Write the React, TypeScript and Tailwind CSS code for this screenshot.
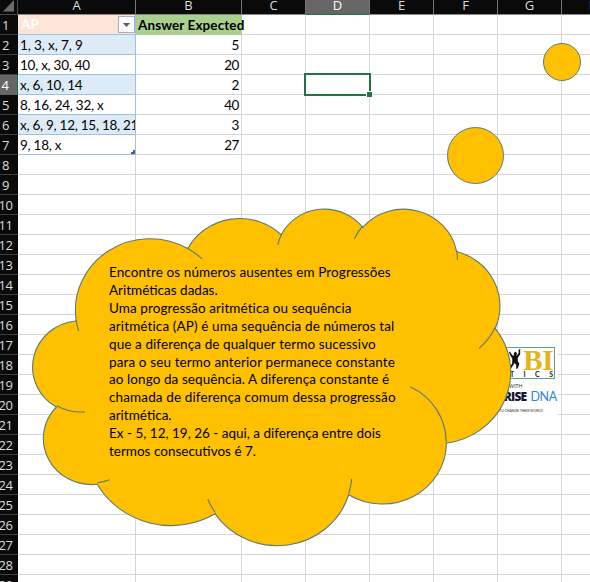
type Arc = [rx: number, ry: number, start: number, sweep: number];

const RAD = Math.PI / 180;

// Converts a visual angle (1/60000 degree) to the ellipse's parametric angle.
function param(rx: number, ry: number, angle: number) {
  const a = (angle / 60000) * RAD;
  return Math.atan2(Math.sin(a) * rx, Math.cos(a) * ry);
}

function arcPath(x: number, y: number, arcs: Arc[]) {
  let d = `M${x} ${y}`;
  for (const [rx, ry, start, sweep] of arcs) {
    const t0 = param(rx, ry, start);
    const t1 = param(rx, ry, start + sweep);
    x += rx * (Math.cos(t1) - Math.cos(t0));
    y += ry * (Math.sin(t1) - Math.sin(t0));
    let span = t1 - t0;
    while (span < 0) span += 2 * Math.PI;
    d += `A${rx} ${ry} 0 ${span > Math.PI ? 1 : 0} 1 ${x.toFixed(1)} ${y.toFixed(1)}`;
  }
  return d;
}

const cloudOutline =
  arcPath(3900, 14370, [
    [6753, 9190, -11429249, 7426832],
    [5333, 7267, -8646143, 5396714],
    [4365, 5945, -8748475, 5983381],
    [4857, 6595, -7859164, 7034504],
    [5333, 7273, -4722533, 6541615],
    [6775, 9220, -2776035, 7816140],
    [5785, 7867, 37501, 6842000],
    [6752, 9215, 1347096, 6910353],
    [7720, 10543, 3974558, 4542661],
    [4360, 5918, -16496525, 8804134],
    [4345, 5945, -14809710, 9151131],
  ]) + "Z";

const cloudFolds = [
  arcPath(4693, 26177, [[4345, 5945, 5204520, 1585770]]),
  arcPath(6928, 34899, [[4360, 5918, 4416628, 686848]]),
  arcPath(16478, 39090, [[6752, 9215, 8257449, 844866]]),
  arcPath(28827, 34751, [[6752, 9215, 387196, 959901]]),
  arcPath(34129, 22954, [[5785, 7867, -4217541, 4255042]]),
  arcPath(41798, 15354, [[5333, 7273, 1819082, 1665090]]),
  arcPath(38324, 5426, [[4857, 6595, -824660, 891534]]),
  arcPath(29078, 3952, [[4857, 6595, -8950887, 1091722]]),
  arcPath(22141, 4720, [[4365, 5945, -9809656, 1061181]]),
  arcPath(14000, 5192, [[6753, 9190, -4002417, 739161]]),
  arcPath(4127, 15789, [[6753, 9190, 9459261, 711490]]),
].join("");

const columns = [
  { name: "A", width: "w-[118px]" },
  { name: "B", width: "w-[106px]" },
  { name: "C", width: "w-16" },
  { name: "D", width: "w-16" },
  { name: "E", width: "w-16" },
  { name: "F", width: "w-16" },
  { name: "G", width: "w-16" },
  { name: "H", width: "w-16" },
];

const data: Record<number, [string, string]> = {
  2: ["1, 3, x, 7, 9", "5"],
  3: ["10, x, 30, 40", "20"],
  4: ["x, 6, 10, 14", "2"],
  5: ["8, 16, 24, 32, x", "40"],
  6: ["x, 6, 9, 12, 15, 18, 21", "3"],
  7: ["9, 18, x", "27"],
};

const lines: [text: string, tracking: string][] = [
  ["Encontre os números ausentes em Progressões", "tracking-[0.1px]"],
  ["Aritméticas dadas.", "tracking-normal"],
  ["Uma progressão aritmética ou sequência", "tracking-[0.08px]"],
  ["aritmética (AP) é uma sequência de números tal", "tracking-[0.11px]"],
  ["que a diferença de qualquer termo sucessivo", "tracking-[0.09px]"],
  ["para o seu termo anterior permanece constante", "tracking-[0.12px]"],
  ["ao longo da sequência. A diferença constante é", "tracking-[0.08px]"],
  ["chamada de diferença comum dessa progressão", "tracking-[0.13px]"],
  ["aritmética.", "tracking-normal"],
  ["Ex - 5, 12, 19, 26 - aqui, a diferença entre dois", "tracking-normal"],
  ["termos consecutivos é 7.", "tracking-normal"],
];

function ColumnHeaders() {
  return (
    <div className="flex h-[15px] w-[690px] bg-[#0a0a0a] font-['Open_Sans',sans-serif] text-[13px] text-[#dcdcdc]">
      <div className="flex h-[15px] w-[18px] shrink-0 items-start justify-end border-r border-b border-[#4a4a4a] pr-[3px]">
        <svg width="12" height="12" viewBox="0 0 12 12">
          <path d="M12 0V11.500H1Z" fill="#6b6b6b" />
        </svg>
      </div>
      {columns.map((c) => (
        <div
          key={c.name}
          className={`${c.width} flex h-[15px] shrink-0 justify-center border-r border-b leading-[10px] ${
            c.name === "D"
              ? "border-r-[#777] border-b-[#217346] bg-[#666] text-white"
              : "border-r-[#777] border-b-[#8a8a8a]"
          }`}
        >
          {c.name}
        </div>
      ))}
    </div>
  );
}

function CellA({ row }: { row: number }) {
  if (row === 1) {
    return (
      <div className="flex h-5 w-[118px] shrink-0 items-center justify-between border-r border-b border-[#9dc3e6] bg-[#fce4d6] pl-[3px]">
        <span className="text-[13.5px] font-bold text-white">AP</span>
        <span className="flex h-[17px] w-[17px] items-center justify-center border border-[#a3b0c0] bg-[#fbfbfc]">
          <svg width="7" height="4" viewBox="0 0 7 4">
            <path d="M0 0H7L3.500 4Z" fill="#5a5a5a" />
          </svg>
        </span>
      </div>
    );
  }
  const entry = data[row];
  if (!entry) return <div className="h-5 w-[118px] shrink-0 border-r border-b border-[#d6d6d6]" />;
  return (
    <div
      className={`relative h-5 w-[118px] shrink-0 overflow-hidden border-r border-b border-[#9dbfe0] pl-[2px] leading-[20px] whitespace-nowrap ${
        row === 2 ? "tracking-[-0.1px]" : "tracking-[-0.26px]"
      } ${row % 2 === 0 ? "bg-[#ddebf7]" : "bg-white"}`}
    >
      {entry[0]}
      {row === 7 && (
        <svg className="absolute right-0 bottom-0" width="4" height="4" viewBox="0 0 4 4">
          <path d="M2 0H4V4H0V2H2Z" fill="#4659a8" />
        </svg>
      )}
    </div>
  );
}

function Row({ row }: { row: number }) {
  return (
    <div className="flex h-5 w-[690px]">
      <div
        className={`flex h-5 w-[18px] shrink-0 justify-center border-b pr-[7px] font-['Open_Sans',sans-serif] text-[13px] leading-[21px] tracking-[-0.5px] ${
          row === 4
            ? "border-r border-r-[#217346] border-b-[#666] bg-[#666] text-white"
            : "border-b-[#3d3d3d] bg-[#0a0a0a] text-[#dcdcdc]"
        }`}
      >
        {row}
      </div>
      <CellA row={row} />
      {row === 1 ? (
        <div className="h-5 w-[106px] shrink-0 bg-[#a9d08e] pl-[2px] text-[13.5px] leading-[20px] font-bold tracking-[0.1px] whitespace-nowrap">
          Answer Expected
        </div>
      ) : (
        <div className="h-5 w-[106px] shrink-0 border-r border-b border-[#d6d6d6] pr-[2px] text-right leading-[20px] tracking-[-0.4px]">
          {data[row]?.[1]}
        </div>
      )}
      {columns.slice(2).map((c) => (
        <div key={c.name} className="h-5 w-16 shrink-0 border-r border-b border-[#d6d6d6]" />
      ))}
    </div>
  );
}

function Logo() {
  return (
    <div className="absolute top-[347px] left-[498px] w-[60px] bg-white font-['Lato',sans-serif]">
      <div className="flex h-[32px] w-[57px] flex-col border border-l-0 border-[#5f9e94]">
        <div className="flex h-[22px] items-start justify-end gap-[2px] pr-px">
          <svg className="mt-[1px]" width="12" height="20" viewBox="0 0 15 23" preserveAspectRatio="none">
            <path
              d="M0 4L1 3L4 7L6 8L6 5L8 3L10 5L9 8L12 5L12 1L14 0L14 6L11 10L11 14L13 17L11 22L9 23L9 18L7 16L5 19L2 23L0 21L4 17L4 11L2 8Z"
              fill="#111"
            />
          </svg>
          <span className="font-['Liberation_Serif',serif] text-[29px] leading-[24px] font-bold tracking-[-0.5px] text-[#e3b320]">
            BI
          </span>
        </div>
        <div className="flex h-[8px] justify-between pr-[1px] pl-[12px] text-[7px] leading-[8px] font-bold text-[#222]">
          <span>T</span>
          <span>I</span>
          <span>C</span>
          <span>S</span>
        </div>
      </div>
      <div className="mt-[4px] pl-[11px] text-[5px] leading-[6px] text-[#333]">WITH</div>
      <div className="mt-[1px] flex h-[14px] justify-end gap-[4px] pr-[1px] font-['Open_Sans',sans-serif] text-[12px] leading-[14px]">
        <span className="font-extrabold tracking-[-0.8px] text-[#141432]">RISE</span>
        <span className="font-['Lato',sans-serif] text-[12.5px] tracking-[-0.3px] text-[#2a86d8]">DNA</span>
      </div>
      <div className="mt-[4px] h-[7px] pl-px text-[3.600px] leading-[6px] tracking-[-0.1px] whitespace-nowrap text-[#333]">
        TO CHANGE THEIR WORLD
      </div>
    </div>
  );
}

function Bubble({ className }: { className: string }) {
  return <div className={`absolute rounded-full border border-[#5d7a80] bg-[#ffc000] ${className}`} />;
}

export default function App() {
  return (
    <div className="relative h-[582px] w-[590px] overflow-hidden bg-white font-['Lato',sans-serif] text-[13.5px] text-black">
      <ColumnHeaders />
      {Array.from({ length: 29 }, (_, i) => (
        <Row key={i} row={i + 1} />
      ))}
      <div className="absolute top-[73px] left-[304px] h-[23px] w-[67px] border-2 border-[#217346]">
        <div className="absolute right-[-3px] bottom-[-3px] h-[6px] w-[6px] border-t border-l border-white bg-[#217346]" />
      </div>
      <Logo />
      <Bubble className="top-[43px] left-[543px] h-[38px] w-[38px]" />
      <Bubble className="top-[127px] left-[447px] h-[57px] w-[57px]" />
      <svg
        className="absolute top-[208px] left-[33px] overflow-visible"
        width="477.500"
        height="336.500"
        viewBox="0 0 43200 43200"
        preserveAspectRatio="none"
      >
        <path d={cloudOutline} fill="#ffc000" stroke="#5d7a70" strokeWidth="1.1" vectorEffect="non-scaling-stroke" />
        <path d={cloudFolds} fill="none" stroke="#5d7a70" strokeWidth="1.1" vectorEffect="non-scaling-stroke" />
      </svg>
      <div className="absolute top-[264px] left-[109px] text-[13.5px] leading-[17.9px] whitespace-nowrap">
        {lines.map(([text, tracking]) => (
          <div key={text} className={tracking}>
            {text}
          </div>
        ))}
      </div>
    </div>
  );
}
